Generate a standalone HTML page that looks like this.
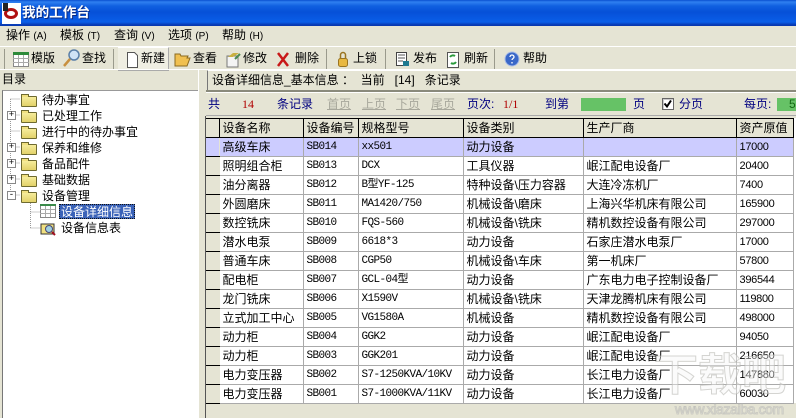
<!DOCTYPE html>
<html><head><meta charset="utf-8"><style>
html,body{margin:0;padding:0}
body{width:796px;height:418px;overflow:hidden;position:relative;background:#e5e4d4;font:12px/14px "Liberation Sans","Noto Sans CJK SC",sans-serif;color:#000}
.a{position:absolute;white-space:nowrap}
.title{left:0;top:0;width:796px;height:26px;background:linear-gradient(#0a50d0 0,#2f80f0 2px,#1060e0 6px,#0650d8 12px,#0a5ee8 22px,#0838b0 25px)}
.c{background:#9a9a8c;width:1px;top:49px;height:20px}
.tb{top:51px}
.i{position:absolute}
.tree{position:absolute;left:2px;top:90px;width:196px;height:328px;background:#fff;border-left:1px solid #777;border-top:1px solid #999;box-sizing:border-box}
.t{left:42px}
.pm{position:absolute;left:7px;width:7px;height:7px;border:1px solid #888;background:#fff;font:9px/7px "Liberation Mono";text-align:center}
.f{position:absolute;left:21px;width:14px;height:9px;background:linear-gradient(#f6ec9c,#e2d26a);border:1px solid #6e6a30;border-radius:1px}
.f:before{content:"";position:absolute;left:-1px;top:-3px;width:6px;height:2px;background:#f0e080;border:1px solid #6e6a30;border-bottom:0}
.n{color:#000080}.r{color:#b00000;font-family:"Liberation Serif","Noto Serif CJK SC",serif}.g{color:#a8a89c;text-decoration:underline}
.x{font-size:10px}
table{position:absolute;left:206px;top:118px;border-collapse:collapse;table-layout:fixed;width:587px;background:#fff;font-size:12px}
td{height:19px;box-sizing:border-box;padding:0 0 0 3px;border-right:1px solid #aaa;border-bottom:1px solid #aaa;white-space:nowrap;overflow:hidden}
tr.h td{background:#e5e4d4;border-top:1px solid #000;border-bottom:1px solid #000;border-right:1px solid #000}
td:first-child{background:#e5e4d4;border-right:1px solid #e5e4d4;border-bottom:1px solid #000;padding:0}
tr.s td{background:#ccccff}tr.s td:first-child{background:#ccccff}
.m{font-family:"Liberation Mono","Noto Sans CJK SC",monospace;font-size:11px;letter-spacing:-.6px}
.v{font-size:11px;letter-spacing:-.3px}
.w{color:rgba(245,245,245,.4);-webkit-text-stroke:1px rgba(185,185,180,.6);font-weight:bold}
</style></head><body>
<div class="a title"></div>
<div class="i" style="left:2px;top:3px;width:19px;height:21px;background:#fff"><div class="i" style="left:2px;top:5px;width:14px;height:11px;border-radius:50%;border:3px solid #b01010;box-sizing:border-box"></div><div class="i" style="left:1px;top:0;width:5px;height:8px;background:#222"></div></div>
<div class="a" style="left:22px;top:4px;color:#fff;font-size:13.6px;line-height:18px;font-weight:bold;text-shadow:1px 1px #0a2a80">我的工作台</div>
<div class="a" style="left:6px;top:28px">操作 <span class="x">(A)</span></div>
<div class="a" style="left:60px;top:28px">模板 <span class="x">(T)</span></div>
<div class="a" style="left:114px;top:28px">查询 <span class="x">(V)</span></div>
<div class="a" style="left:168px;top:28px">选项 <span class="x">(P)</span></div>
<div class="a" style="left:222px;top:28px">帮助 <span class="x">(H)</span></div>
<div class="a" style="left:0;top:46px;width:796px;height:1px;background:#fff"></div>
<div class="a c" style="left:4px"></div><div class="a c" style="left:113px"></div><div class="a c" style="left:326px"></div><div class="a c" style="left:385px"></div><div class="a c" style="left:494px"></div>
<div class="a" style="left:118px;top:47px;width:50px;height:22px;background:#efeee2;border-right:1px solid #aaa;border-bottom:1px solid #aaa;border-top:1px solid #fff"></div>
<svg class="i" style="left:0;top:46px" width="796" height="24" viewBox="0 46 796 24">
<rect x="13.5" y="52.5" width="15" height="14" fill="#fff" stroke="#888"/><rect x="13" y="52" width="16" height="3" fill="#2d8a3a"/><path d="M13 58.5h16M13 62.500h16M18.5 55v11M23.5 55v11" stroke="#aaa"/>
<circle cx="74" cy="55" r="5" fill="#cfe2f5" stroke="#5a7fa8" stroke-width="1.5"/><path d="M70 59l-6 7" stroke="#c89040" stroke-width="2.5"/>
<path d="M127.500 52.500h7l3 3v12h-10z" fill="#fff" stroke="#555"/>
<path d="M175 54h5l1 2h7l-1 2h3l-3 8h-12z" fill="#f0c050" stroke="#8a6a20"/>
<path d="M227 56h11v11h-11z" fill="#f4f4f4" stroke="#777"/><path d="M228 57l5-4h6l-6 4z" fill="#c8b040"/><path d="M235 59l5-5" stroke="#4a8a50" stroke-width="2"/>
<path d="M278 53l10 13M288 53l-10 13" stroke="#c81818" stroke-width="2.5"/>
<rect x="338.500" y="58.500" width="9" height="8" rx="2" fill="#e8b840" stroke="#9a7420"/><path d="M340.500 58v-3a2.500 2.500 0 015 0v3" fill="none" stroke="#9a7420" stroke-width="1.500"/>
<rect x="396.500" y="52.500" width="10" height="13" fill="#fff" stroke="#444"/><path d="M398 55h7M398 58h7M398 61h5" stroke="#555"/><rect x="403" y="61" width="6" height="5" fill="#1f7a90"/>
<rect x="447.500" y="52.500" width="11" height="15" fill="#fff" stroke="#555"/><path d="M450 57a3.500 3.500 0 015-1M456 62a3.500 3.500 0 01-5 1" fill="none" stroke="#2a9a3a" stroke-width="2"/>
<circle cx="512" cy="59" r="7" fill="#3a68c8" stroke="#a8bce8"/><path d="M510 57a2 2 0 114 0c0 1.500-2 1.500-2 3M512 62v1.500" fill="none" stroke="#fff" stroke-width="1.300"/>
</svg>
<div class="a tb" style="left:31px">模版</div><div class="a tb" style="left:82px">查找</div><div class="a tb" style="left:141px">新建</div><div class="a tb" style="left:193px">查看</div><div class="a tb" style="left:243px">修改</div><div class="a tb" style="left:295px">删除</div><div class="a tb" style="left:353px">上锁</div><div class="a tb" style="left:413px">发布</div><div class="a tb" style="left:464px">刷新</div><div class="a tb" style="left:523px">帮助</div>
<div class="a" style="left:0;top:69px;width:796px;height:1px;background:#fff"></div>
<div class="a" style="left:2px;top:72px">目录</div>
<div class="tree"></div>
<div class="a" style="left:198px;top:70px;width:1px;height:348px;background:#fff"></div>
<svg class="i" style="left:0;top:85px" width="60" height="160" viewBox="0 0 60 160"><path d="M10.500 14V106M10.500 14h10M10.500 30h10M10.500 46h10M10.500 62h10M10.500 78h10M10.500 94h10M10.500 110h10M30.500 116V143M30.500 127h9M30.500 143h9" stroke="#999" stroke-dasharray="1 1" fill="none"/></svg>
<div class="f" style="top:96px"></div><div class="f" style="top:112px"></div><div class="f" style="top:128px"></div><div class="f" style="top:144px"></div><div class="f" style="top:160px"></div><div class="f" style="top:176px"></div><div class="f" style="top:192px"></div>
<div class="pm" style="top:111px">+</div><div class="pm" style="top:143px">+</div><div class="pm" style="top:159px">+</div><div class="pm" style="top:175px">+</div><div class="pm" style="top:191px">-</div>
<div class="a t" style="top:93px">待办事宜</div><div class="a t" style="top:109px">已处理工作</div><div class="a t" style="top:125px">进行中的待办事宜</div><div class="a t" style="top:141px">保养和维修</div><div class="a t" style="top:157px">备品配件</div><div class="a t" style="top:173px">基础数据</div><div class="a t" style="top:189px">设备管理</div>
<svg class="i" style="left:40px;top:204px" width="18" height="34" viewBox="0 0 18 34"><rect x=".5" y=".5" width="15" height="13" fill="#fff" stroke="#888"/><rect x="0" y="0" width="16" height="2" fill="#3a8a4a"/><path d="M0 5.500h15M0 9.500h15M5.500 2v11M10.500 2v11" stroke="#aaa"/><path d="M1 20h13v10H1z" fill="#f0e080" stroke="#333"/><circle cx="9" cy="25" r="3.500" fill="#9fd0e0" stroke="#447"/><path d="M12 28l3 3" stroke="#a01020" stroke-width="2"/></svg>
<div class="a" style="left:59px;top:204px;width:76px;height:15px;background:#3a62b8;outline:1px dotted #111;outline-offset:-1px"></div>
<div class="a t" style="top:205px;left:61px;color:#fff">设备详细信息</div>
<div class="a t" style="top:221px;left:61px">设备信息表</div>
<div class="a" style="left:207px;top:70px;width:589px;height:20px;border-top:1px solid #fff;border-left:1px solid #777;box-sizing:border-box"></div>
<div class="a" style="left:212px;top:73px">设备详细信息_基本信息 ：&nbsp; 当前&nbsp;&nbsp; [14]&nbsp;&nbsp; 条记录</div>
<div class="a" style="left:206px;top:90px;width:590px;height:2px;background:#8a8a7c"></div>
<div class="a" style="left:206px;top:92px;width:590px;height:1px;background:#fff"></div>
<div class="a n" style="left:208px;top:97px">共</div><div class="a r" style="left:242px;top:97px">14</div><div class="a n" style="left:277px;top:97px">条记录</div>
<div class="a g" style="left:327px;top:97px">首页</div><div class="a g" style="left:362px;top:97px">上页</div><div class="a g" style="left:396px;top:97px">下页</div><div class="a g" style="left:431px;top:97px">尾页</div>
<div class="a n" style="left:467px;top:97px">页次:</div><div class="a r" style="left:503px;top:97px">1/1</div><div class="a n" style="left:545px;top:97px">到第</div>
<div class="a" style="left:581px;top:98px;width:45px;height:13px;background:#66c266"></div>
<div class="a n" style="left:633px;top:97px">页</div>
<div class="a" style="left:662px;top:98px;width:10px;height:10px;border:1px solid #666;background:#fff;box-shadow:inset 1px 1px #ccc"></div>
<svg class="i" style="left:663px;top:99px" width="10" height="10"><path d="M1.500 4.500l2.500 3 4-6" fill="none" stroke="#000" stroke-width="2"/></svg>
<div class="a n" style="left:679px;top:97px">分页</div><div class="a n" style="left:744px;top:97px">每页:</div>
<div class="a" style="left:777px;top:98px;width:19px;height:13px;background:#66c266"></div><div class="a" style="left:789px;top:97px;color:#146a14">5</div>
<div class="a" style="left:206px;top:115px;width:590px;height:1px;background:#aaa"></div>
<div class="a" style="left:793px;top:118px;width:3px;height:285px;background:#fff"></div>
<table><colgroup><col style="width:13px"><col style="width:84px"><col style="width:55px"><col style="width:105px"><col style="width:120px"><col style="width:153px"><col style="width:57px"></colgroup>
<tr class="h"><td></td><td>设备名称</td><td>设备编号</td><td>规格型号</td><td>设备类别</td><td>生产厂商</td><td>资产原值</td></tr>
<tr class="s"><td></td><td>高级车床</td><td class="m">SB014</td><td class="m">xx501</td><td>动力设备</td><td></td><td class="v">17000</td></tr>
<tr><td></td><td>照明组合柜</td><td class="m">SB013</td><td class="m">DCX</td><td>工具仪器</td><td>岷江配电设备厂</td><td class="v">20400</td></tr>
<tr><td></td><td>油分离器</td><td class="m">SB012</td><td class="m">B型YF-125</td><td>特种设备\压力容器</td><td>大连冷冻机厂</td><td class="v">7400</td></tr>
<tr><td></td><td>外圆磨床</td><td class="m">SB011</td><td class="m">MA1420/750</td><td>机械设备\磨床</td><td>上海兴华机床有限公司</td><td class="v">165900</td></tr>
<tr><td></td><td>数控铣床</td><td class="m">SB010</td><td class="m">FQS-560</td><td>机械设备\铣床</td><td>精机数控设备有限公司</td><td class="v">297000</td></tr>
<tr><td></td><td>潜水电泵</td><td class="m">SB009</td><td class="m">6618*3</td><td>动力设备</td><td>石家庄潜水电泵厂</td><td class="v">17000</td></tr>
<tr><td></td><td>普通车床</td><td class="m">SB008</td><td class="m">CGP50</td><td>机械设备\车床</td><td>第一机床厂</td><td class="v">57800</td></tr>
<tr><td></td><td>配电柜</td><td class="m">SB007</td><td class="m">GCL-04型</td><td>动力设备</td><td>广东电力电子控制设备厂</td><td class="v">396544</td></tr>
<tr><td></td><td>龙门铣床</td><td class="m">SB006</td><td class="m">X1590V</td><td>机械设备\铣床</td><td>天津龙腾机床有限公司</td><td class="v">119800</td></tr>
<tr><td></td><td>立式加工中心</td><td class="m">SB005</td><td class="m">VG1580A</td><td>机械设备</td><td>精机数控设备有限公司</td><td class="v">498000</td></tr>
<tr><td></td><td>动力柜</td><td class="m">SB004</td><td class="m">GGK2</td><td>动力设备</td><td>岷江配电设备厂</td><td class="v">94050</td></tr>
<tr><td></td><td>动力柜</td><td class="m">SB003</td><td class="m">GGK201</td><td>动力设备</td><td>岷江配电设备厂</td><td class="v">216650</td></tr>
<tr><td></td><td>电力变压器</td><td class="m">SB002</td><td class="m">S7-1250KVA/10KV</td><td>动力设备</td><td>长江电力设备厂</td><td class="v">147880</td></tr>
<tr><td></td><td>电力变压器</td><td class="m">SB001</td><td class="m">S7-1000KVA/11KV</td><td>动力设备</td><td>长江电力设备厂</td><td class="v">60030</td></tr>
</table>
<div class="a" style="left:205px;top:116px;width:1px;height:302px;background:#555"></div>
<div class="a w" style="left:654px;top:351px;font-size:44px;line-height:50px">下载吧</div>
<div class="a w" style="left:675px;top:402px;font-size:14px;line-height:15px;font-weight:normal;letter-spacing:-.4px">www.xiazaiba.com</div>
</body></html>
